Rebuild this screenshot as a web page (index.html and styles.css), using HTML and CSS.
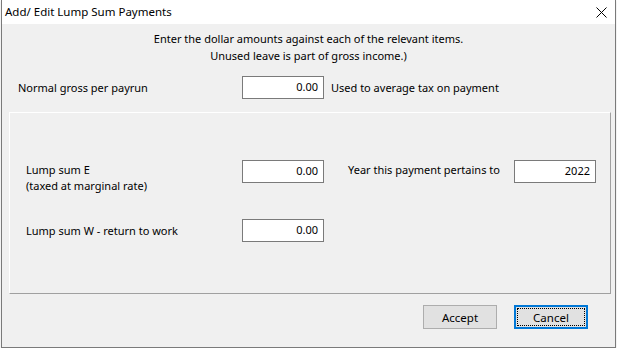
FILE: index.html
```html
<!DOCTYPE html>
<html lang="en">
<head>
    <meta charset="UTF-8">
    <title>Add/ Edit Lump Sum Payments</title>
    <link rel="stylesheet" href="styles.css">
</head>
<body>
    <div class="dialog">
        <div class="titlebar">
            <span class="title">Add/ Edit Lump Sum Payments</span>
            <svg class="close" width="11" height="11" viewBox="0 0 11 11">
                <path d="M0.5 0.5 L10.5 10.5 M10.5 0.5 L0.5 10.5" stroke="#000" stroke-width="1" fill="none"/>
            </svg>
        </div>

        <p class="intro">Enter the dollar amounts against each of the relevant items.<br>Unused leave is part of gross income.)</p>

        <div class="row top-row">
            <label class="label">Normal gross per payrun</label>
            <div class="field">0.00</div>
            <span class="note">Used to average tax on payment</span>
        </div>

        <div class="panel">
            <div class="row row-e">
                <label class="label">Lump sum E<br>(taxed at marginal rate)</label>
                <div class="field">0.00</div>
                <label class="year-label">Year this payment pertains to</label>
                <div class="field year">2022</div>
            </div>
            <div class="row row-w">
                <label class="label">Lump sum W - return to work</label>
                <div class="field">0.00</div>
            </div>
        </div>

        <div class="buttons">
            <button class="btn">Accept</button>
            <button class="btn focused">Cancel</button>
        </div>
    </div>
</body>
</html>
```

FILE: styles.css
```css
html, body { margin: 0; padding: 0; background: #ffffff; }
body {
    font-family: "Noto Sans", "Liberation Sans", sans-serif;
    font-size: 11px;
    color: #000;
}
.dialog {
    margin-left: 1px;
    width: 613px;
    height: 347px;
    border-left: 1px solid #7a7a7a;
    border-right: 1px solid #7a7a7a;
    border-bottom: 1px solid #7a7a7a;
    background: #f0f0f0;
    box-shadow: 0 1px 2px rgba(0, 0, 0, 0.15);
}
.titlebar {
    height: 24px;
    background: #fff;
    display: flex;
    align-items: center;
    justify-content: space-between;
    padding: 0 8px 0 3px;
    font-size: 11.5px;
}
.title { line-height: 16px; padding-bottom: 1px; }
.close { display: block; margin-top: 1px; }

.intro {
    margin: 6px 0 0;
    text-align: center;
    line-height: 17px;
}

.row {
    display: flex;
    align-items: center;
}
.label { width: 224px; line-height: 16px; }
.field {
    box-sizing: border-box;
    width: 82px;
    height: 23px;
    background: #fff;
    border: 1px solid #7a7a7a;
    text-align: right;
    padding-right: 5px;
    line-height: 20px;
}
.top-row { margin-top: 12px; padding-left: 16px; }
.note { margin-left: 7px; }

.panel {
    margin: 13px 4px 0 7px;
    height: 182px;
    box-sizing: border-box;
    border-top: 1px solid #fff;
    border-left: 1px solid #fff;
    border-right: 1px solid #a0a0a0;
    border-bottom: 1px solid #a0a0a0;
    padding: 47px 0 0 16px;
}
.row-e .label { width: 216px; padding-top: 2px; }
.row-e { align-items: flex-start; }
.row-e .year-label { margin-left: 24px; width: 166px; line-height: 20px; }
.row-w { margin-top: 25px; }
.row-w .label { width: 216px; }

.buttons {
    display: flex;
    justify-content: flex-end;
    gap: 17px;
    padding: 11px 27px 0 0;
}
.btn {
    box-sizing: border-box;
    width: 74px;
    height: 24px;
    font: inherit;
    font-size: 11.5px;
    color: #000;
    background: #e1e1e1;
    border: 1px solid #adadad;
    padding: 0;
    margin: 0;
}
.btn.focused {
    border: 2px solid #0078d7;
    outline: 1px dotted #000;
    outline-offset: -4px;
}
```
